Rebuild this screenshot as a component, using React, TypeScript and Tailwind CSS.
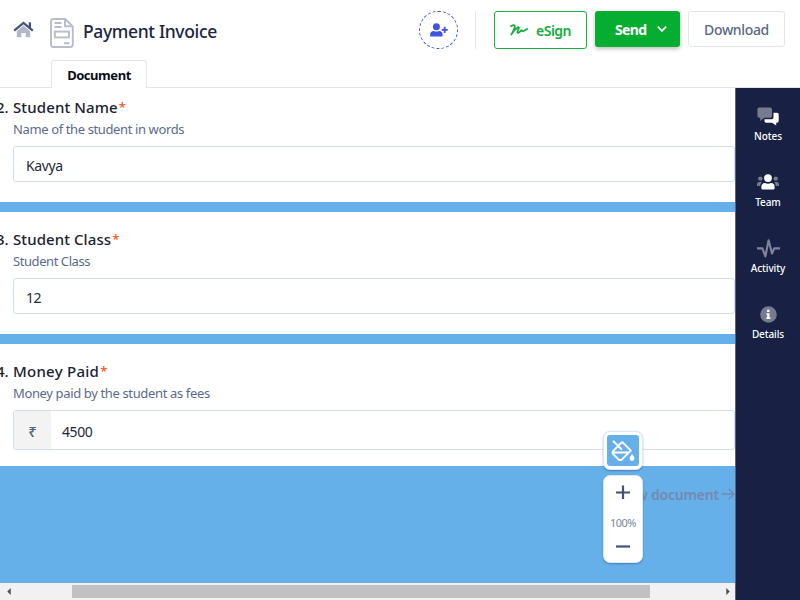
import React from "react";

const HomeIcon = () => (
  <svg viewBox="0 0 21 17" className="block h-[17px] w-[21px]">
    <path d="M10.5 4.6 L3.8 10.2 V16.3 H8.3 V12 H12.7 V16.3 H17.2 V10.2 Z" fill="#b3b8c8" />
    <path d="M1.2 9.6 L10.5 1.9 L19.8 9.6 M16.9 6.6 V1.2" fill="none" stroke="#445478" strokeWidth="2.3" />
  </svg>
);

const FormIcon = () => (
  <svg viewBox="0 0 24 30" className="block h-[30px] w-6" fill="none" stroke="#b8bccb" strokeWidth="1.9">
    <path d="M3.2 1 H15.2 L22.8 8.6 V26.6 Q22.8 29 20.4 29 H3.4 Q1 29 1 26.6 V3.4 Q1 1 3.2 1 Z" />
    <path d="M15 1.2 V8.2 H22.6" />
    <path d="M4.5 5 H11.5 M4.5 9 H11.5 M14 25.2 H19.5" />
    <rect x="4.8" y="13.6" width="14.2" height="5.8" />
  </svg>
);

const UserPlusIcon = () => (
  <svg viewBox="0 0 18 14" className="block h-[14px] w-[18px]" fill="#3f52e0">
    <circle cx="6.4" cy="3.8" r="3.5" />
    <path d="M0.2 13.6 V11.6 Q0.2 8 3.8 8 Q6.4 9.2 9 8 Q12.6 8 12.6 11.6 V12.6 Q12.6 13.6 11.6 13.6 Z" />
    <path d="M13.8 3.7 H15.6 V5.9 H17.8 V7.7 H15.6 V9.9 H13.8 V7.7 H11.7 V5.9 H13.8 Z" />
  </svg>
);

const SignIcon = () => (
  <svg viewBox="0 0 18 12" className="block h-3 w-[18px]" fill="none" stroke="#16ad3e" strokeWidth="1.7" strokeLinecap="round" strokeLinejoin="round">
    <path d="M0.9 2.2 Q4.8 0 4.8 2.1 Q4.7 4.8 1.3 10.6 Q4.6 5.1 8.2 3.2 Q9.6 2.9 8.4 5.3 Q6.7 8.9 8.1 9 Q9 9 11 6.6 Q11.9 5.7 12 6.8 Q12.2 8 17.2 5" />
  </svg>
);

const NotesIcon = () => (
  <svg viewBox="0 0 22 19" className="block h-[19px] w-[22px]">
    <path d="M2.2 0.4 H13.2 Q15 0.4 15 2.2 V9 Q15 10.8 13.2 10.8 H7.4 L3.2 14 V10.8 H2.2 Q0.4 10.8 0.4 9 V2.2 Q0.4 0.4 2.2 0.4 Z" fill="#767b90" />
    <path d="M16.5 5.8 H20 Q21.7 5.8 21.7 7.5 V14 Q21.7 15.7 20 15.7 H19.2 V18.4 L15 15.7 H9.2 Q7.5 15.7 7.5 14 V12.2 H14.6 Q16.5 12.2 16.5 10.3 Z" fill="#fff" />
  </svg>
);

const TeamIcon = () => (
  <svg viewBox="0 0 22 16" className="block h-4 w-[22px]">
    <g fill="#767b90">
      <circle cx="3.3" cy="4.6" r="2.2" />
      <circle cx="18.7" cy="4.6" r="2.2" />
      <path d="M0 12 V10.2 Q0 8 2.2 8 H5.1 Q3.2 9.5 3.2 12 Z M22 12 V10.2 Q22 8 19.8 8 H16.9 Q18.8 9.5 18.8 12 Z" />
    </g>
    <circle cx="11" cy="4.1" r="3.9" fill="#fff" />
    <path d="M4.4 14.2 V12.8 Q4.4 9.1 8 9.1 Q11 10.2 14 9.1 Q17.6 9.1 17.6 12.8 V14.2 Q17.6 15.6 16.2 15.6 H5.8 Q4.4 15.6 4.4 14.2 Z" fill="#fff" />
  </svg>
);

const ActivityIcon = () => (
  <svg viewBox="0 0 23 19" className="block h-[19px] w-[23px]" fill="none" stroke="#80859a" strokeWidth="2.1" strokeLinejoin="round">
    <path d="M0 9.4 H5.4 L8.4 17.4 L11.6 1.3 L15 14.6 L17.2 9.4 H23" />
  </svg>
);

const InfoIcon = () => (
  <svg viewBox="0 0 17 17" className="block h-[17px] w-[17px]">
    <circle cx="8.5" cy="8.5" r="8.3" fill="#767b90" />
    <path d="M7.1 3.8 H9.5 V6 H7.1 Z M6.4 7.2 H9.5 V11.2 H10.4 V12.9 H6.4 V11.2 H7.2 V8.8 H6.4 Z" fill="#fff" />
  </svg>
);

const FillIcon = () => (
  <svg viewBox="0 0 24 22" className="block h-[22px] w-6" fill="none" stroke="#fff" strokeWidth="1.9" strokeLinejoin="round" strokeLinecap="round">
    <path d="M2.6 1.5 L10.2 9 M7.1 5.8 L10.5 2.6 Q11.2 2 11.9 2.6 L19.8 10.6 L11 19.4 Q9.3 20.7 7.5 19.4 L2.3 14.3 Q0.8 12.6 2.3 10.8 L9.6 3.5 M1.8 12.5 H18" />
    <path d="M21 14 Q18.6 17 18.6 18.5 Q18.6 20.9 21 20.9 Q23.4 20.9 23.4 18.5 Q23.4 17 21 14 Z" fill="#fff" stroke="none" />
  </svg>
);

const sideItems = [
  { label: "Notes", icon: <NotesIcon /> },
  { label: "Team", icon: <TeamIcon /> },
  { label: "Activity", icon: <ActivityIcon /> },
  { label: "Details", icon: <InfoIcon /> },
];

type FieldProps = { num: string; label: string; hint: string; labelClass: string; hintClass: string; children: React.ReactNode };

function Field({ num, label, hint, labelClass, hintClass, children }: FieldProps) {
  return (
    <section className="h-[122px] bg-white pl-[13px] pt-4">
      <div className="-ml-[17px] flex h-[23px] items-center text-[15px] font-medium leading-[23px] text-[#1c2230]">
        <span className="w-[17px] shrink-0">{num}</span>
        <span className={labelClass}>{label}</span>
        <span className="ml-px text-[13px] text-[#ff4f14]">*</span>
      </div>
      <div className="flex h-[21px] items-center text-[13px] text-[#5b6b8c]">
        <span className={hintClass}>{hint}</span>
      </div>
      <div className="mt-[6px]">{children}</div>
    </section>
  );
}

export default function App() {
  return (
    <div className="flex h-[600px] w-[800px] flex-col overflow-hidden whitespace-nowrap bg-white font-['Noto_Sans','Open_Sans',sans-serif]">
      <header className="flex h-[88px] shrink-0 flex-col border-b border-[#e1e5f0]">
        <div className="flex h-[60px] shrink-0 items-start">
          <div className="ml-[13px] mt-[21px]"><HomeIcon /></div>
          <div className="ml-4 mt-[18px]"><FormIcon /></div>
          <h1 className="ml-[9px] mt-[17px] w-[336px] text-[17.5px] font-medium leading-[28px] tracking-[-0.36px] text-[#1c2541]">Payment Invoice</h1>
          <div className="mt-[11px] flex h-[38px] w-[39px] items-center justify-center rounded-full border border-dashed border-[#3f52e0]"><UserPlusIcon /></div>
          <div className="ml-[17px] mt-[11px] h-[38px] w-px bg-[#e1e5f0]" />
          <button className="ml-[18px] mt-[11px] flex h-[38px] w-[93px] items-center rounded-[3px] border border-[#16b045] pl-[15px] text-[14px] font-semibold text-[#16ad3e]">
            <SignIcon /><span className="ml-2 tracking-[-0.5px]">eSign</span>
          </button>
          <button className="ml-2 mt-[11px] flex h-9 w-[85px] items-center rounded-[3px] bg-[#05ad31] pl-5 text-[14px] font-bold text-white shadow-[0_2px_4px_rgba(0,0,0,0.25)]">
            <span className="w-[42px] pt-px text-left tracking-[-0.6px]">Send</span>
            <svg viewBox="0 0 10 6" className="h-[6px] w-[10px]" fill="none" stroke="white" strokeWidth="1.7"><path d="M0.8 0.7 L5 4.9 L9.2 0.7" /></svg>
          </button>
          <button className="ml-2 mt-[11px] flex h-9 w-[97px] items-center justify-center rounded-[3px] border border-[#dfe4f0] pt-px text-[14px] font-medium tracking-[-0.35px] text-[#5b6883]">Download</button>
        </div>
        <div className="-mb-px ml-[51px] flex h-7 w-24 shrink-0 items-center justify-center rounded-t-[3px] border border-b-0 border-[#e1e5f0] bg-white pt-[2px] text-[13px] font-bold tracking-[-0.45px] text-[#0a0d18]">Document</div>
      </header>

      <div className="flex min-h-0 flex-1">
        <div className="relative flex w-[735px] shrink-0 flex-col">
          <main className="h-[495px] overflow-hidden bg-[#66b0e9]">
            <div className="-mt-2 flex flex-col gap-[10px]">
              <Field num="2." label="Student Name" hint="Name of the student in words" labelClass="tracking-[0.12px]" hintClass="tracking-[-0.38px]">
                <div className="flex h-9 items-center rounded-[3px] border border-[#d3dff1] pl-3 pt-[2px] text-[14px] tracking-[-0.4px] text-[#242936]">Kavya</div>
              </Field>
              <Field num="3." label="Student Class" hint="Student Class" labelClass="tracking-[0.08px]" hintClass="tracking-[-0.43px]">
                <div className="flex h-9 items-center rounded-[3px] border border-[#d3dff1] pl-3 pt-[2px] text-[14px] tracking-[-0.4px] text-[#242936]">12</div>
              </Field>
              <Field num="4." label="Money Paid" hint="Money paid by the student as fees" labelClass="tracking-[0.26px]" hintClass="tracking-[-0.36px]">
                <div className="flex h-10 items-center overflow-hidden rounded-[3px] border border-[#d3dff1] text-[14px] text-[#242936]">
                  <span className="flex h-full w-[37px] items-center justify-center bg-[#f3f3f4] pt-[3px] text-[15px] font-medium text-[#526184]">₹</span>
                  <span className="pl-[11px] pt-[3px] tracking-[-0.4px]">4500</span>
                </div>
              </Field>
            </div>
            <div className="mt-4 flex h-6 items-center justify-end text-[14px] font-semibold text-[#7489b0]">
              <span className="tracking-[-0.2px]">New document</span>
              <svg viewBox="0 0 13 12" className="ml-[3px] h-3 w-[13px]" fill="none" stroke="#7489b0" strokeWidth="1.5"><path d="M0 6 H12 M6.8 0.7 L12 6 L6.8 11.3" /></svg>
            </div>
          </main>
          <div className="flex h-[17px] items-center bg-[#f1f1f1]">
            <svg viewBox="0 0 4 8" className="ml-[6px] h-[7px] w-1.5"><path d="M4 0 V8 L0 4 Z" fill="#505050" /></svg>
            <div className="ml-[60px] h-[13px] w-[578px] bg-[#c1c1c1]" />
            <svg viewBox="0 0 4 8" className="ml-[75px] h-[7px] w-1.5"><path d="M0 0 V8 L4 4 Z" fill="#505050" /></svg>
          </div>

          <div className="absolute left-[603px] top-[343px] flex flex-col gap-[5px]">
            <div className="flex h-[39px] w-10 items-center justify-center rounded-[7px] border border-[#dce7f4] bg-white shadow-[0_1px_2px_rgba(20,40,80,0.35)]">
              <div className="flex h-[31px] w-8 items-center justify-center rounded-[3px] bg-[#66b0e9]"><FillIcon /></div>
            </div>
            <div className="flex h-[88px] w-10 flex-col items-center rounded-[7px] border border-[#dce7f4] bg-white shadow-[0_1px_2px_rgba(20,40,80,0.35)]">
              <svg viewBox="0 0 14 14" className="mt-[9px] h-[14px] w-[14px]" stroke="#445174" strokeWidth="2.2"><path d="M0 7.5 H14 M7 0.5 V14" /></svg>
              <span className="mt-4 text-[11px] leading-[16px] tracking-[-0.5px] text-[#7b879d]">100%</span>
              <svg viewBox="0 0 14 3" className="mt-[14px] h-[3px] w-[14px]"><path d="M0 1.5 H14" stroke="#445174" strokeWidth="2.2" /></svg>
            </div>
          </div>
        </div>

        <aside className="flex w-[65px] shrink-0 flex-col border-l border-[#5a6280] bg-[#182044] pt-[18px]">
          {sideItems.map((item) => (
            <div key={item.label} className="flex h-[66px] flex-col items-center">
              <div className="flex h-5 items-center justify-center">{item.icon}</div>
              <span className="mt-[3px] text-[10px] font-medium leading-[15px] tracking-[-0.1px] text-white">{item.label}</span>
            </div>
          ))}
        </aside>
      </div>
    </div>
  );
}
